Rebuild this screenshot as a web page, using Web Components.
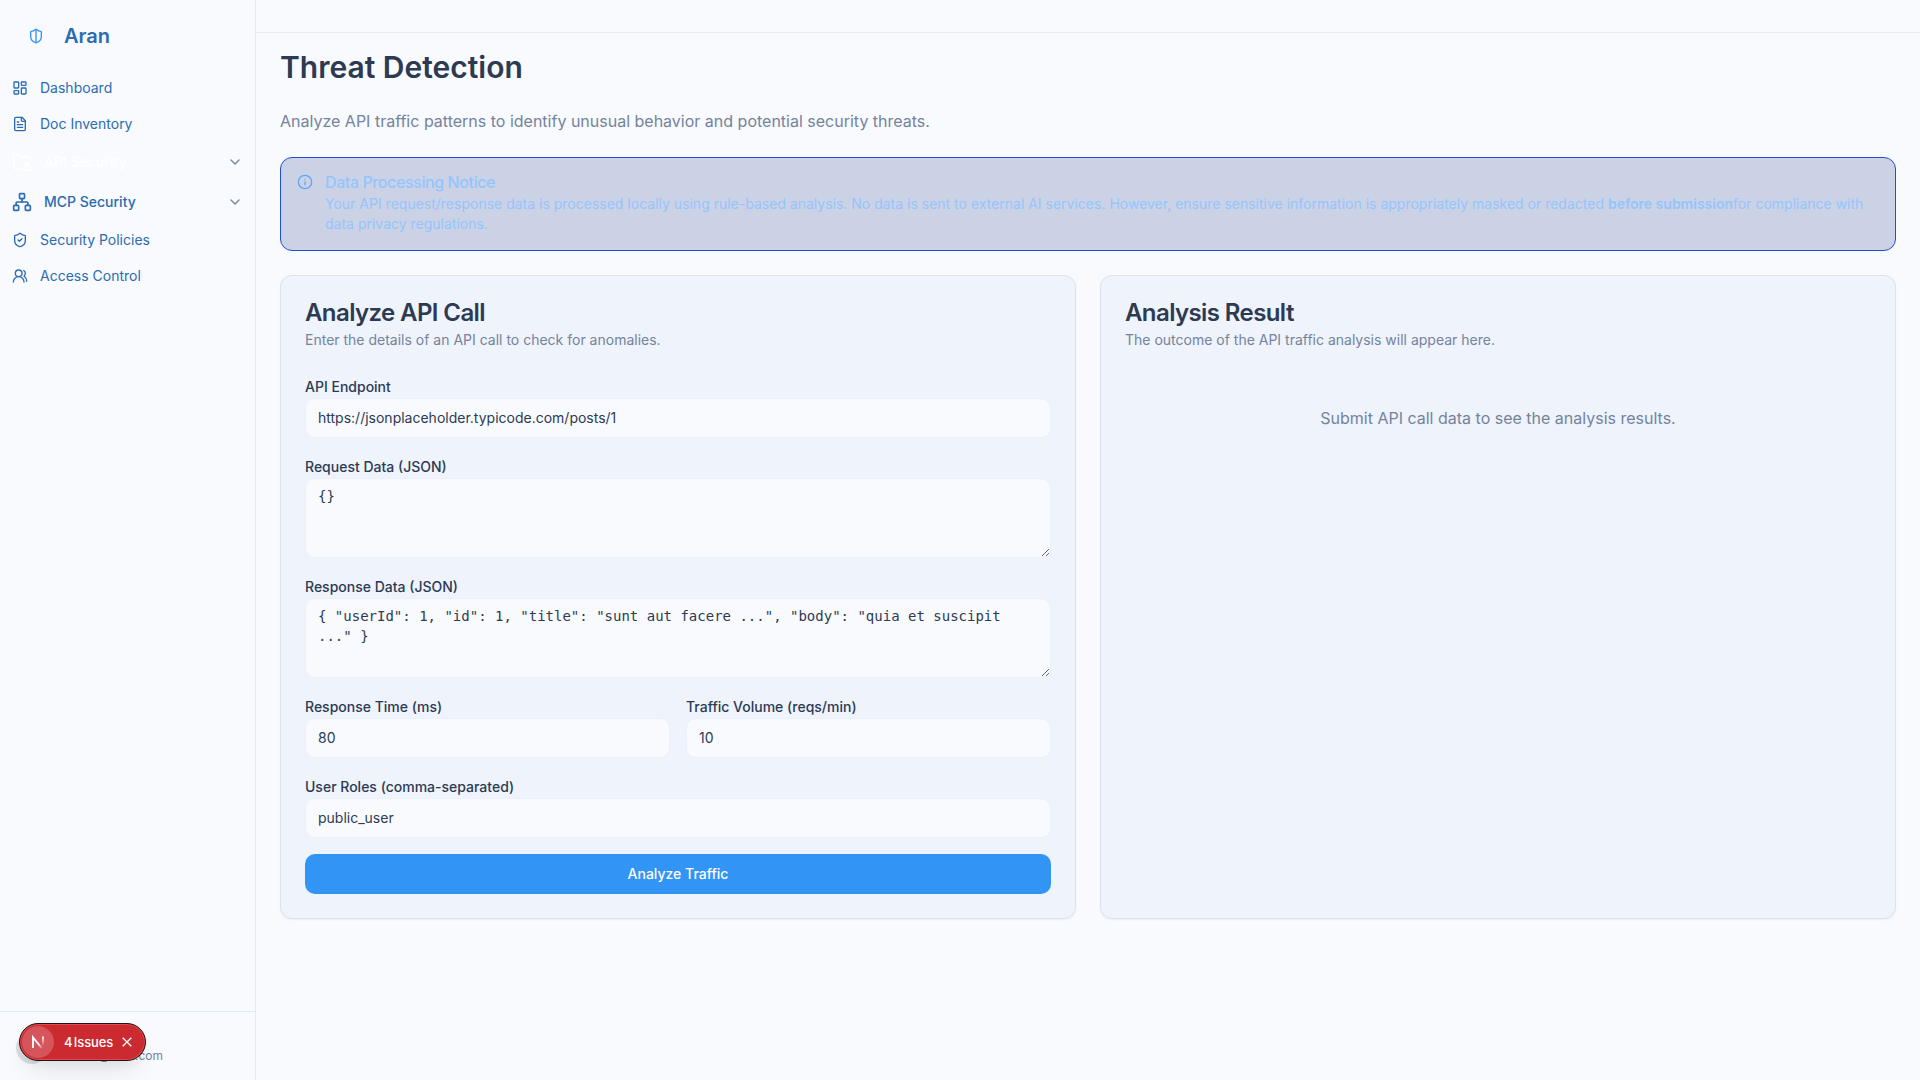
<!DOCTYPE html>
<html lang="en">
<head>
<meta charset="utf-8">
<title>Aran - Threat Detection</title>
<style>
body{margin:0;height:1080px;overflow:hidden;background:#f8fafe;color:#2d3a52;font-family:Inter,"Liberation Sans",sans-serif;font-size:16px;line-height:24px}
</style>
</head>
<body>
<aran-app></aran-app>
<script>
const ICONS = {
  shield: '<path d="M20 13c0 5-3.5 7.5-7.66 8.95a1 1 0 0 1-.67-.01C7.500 20.500 4 18 4 13V6a1 1 0 0 1 1-1c2 0 4.500-1.200 6.240-2.720a1.170 1.170 0 0 1 1.520 0C14.510 3.810 17 5 19 5a1 1 0 0 1 1 1z"/><path d="M12 22V2"/>',
  dashboard: '<rect width="7" height="9" x="3" y="3" rx="1"/><rect width="7" height="5" x="14" y="3" rx="1"/><rect width="7" height="9" x="14" y="12" rx="1"/><rect width="7" height="5" x="3" y="16" rx="1"/>',
  file: '<path d="M15 2H6a2 2 0 0 0-2 2v16a2 2 0 0 0 2 2h12a2 2 0 0 0 2-2V7Z"/><path d="M14 2v4a2 2 0 0 0 2 2h4"/><path d="M10 9H8"/><path d="M16 13H8"/><path d="M16 17H8"/>',
  folder: '<rect width="8" height="5" x="14" y="17" rx="1"/><path d="M10 20H4a2 2 0 0 1-2-2V5a2 2 0 0 1 2-2h3.900a2 2 0 0 1 1.690.9l.81 1.200a2 2 0 0 0 1.670.9H20a2 2 0 0 1 2 2v2.500"/><path d="M20 17v-2a2 2 0 1 0-4 0v2"/>',
  network: '<rect x="16" y="16" width="6" height="6" rx="1"/><rect x="2" y="16" width="6" height="6" rx="1"/><rect x="9" y="2" width="6" height="6" rx="1"/><path d="M5 16v-3a1 1 0 0 1 1-1h12a1 1 0 0 1 1 1v3"/><path d="M12 12V8"/>',
  check: '<path d="M20 13c0 5-3.500 7.500-7.660 8.950a1 1 0 0 1-.67-.01C7.500 20.500 4 18 4 13V6a1 1 0 0 1 1-1c2 0 4.500-1.200 6.240-2.720a1.170 1.170 0 0 1 1.520 0C14.510 3.810 17 5 19 5a1 1 0 0 1 1 1z"/><path d="m9 12 2 2 4-4"/>',
  users: '<path d="M18 21a8 8 0 0 0-16 0"/><circle cx="10" cy="8" r="5"/><path d="M22 20c0-3.370-2-6.500-4-8a5 5 0 0 0-.45-8.300"/>',
  chevron: '<path d="m6 9 6 6 6-6"/>',
  info: '<circle cx="12" cy="12" r="10"/><path d="M12 16v-4"/><path d="M12 8h.01"/>'
};
function define(name, html) {
  const template = document.createElement('template');
  template.innerHTML = html;
  customElements.define(name, class extends HTMLElement {
    constructor() {
      super();
      this.attachShadow({mode: 'open'}).append(template.content.cloneNode(true));
    }
  });
}
customElements.define('a-icon', class extends HTMLElement {
  connectedCallback() {
    const s = this.getAttribute('size') || 16;
    const root = this.shadowRoot || this.attachShadow({mode: 'open'});
    root.innerHTML = `<style>:host{display:block;flex:none;width:${s}px;height:${s}px}svg{display:block}</style>
    <svg width="${s}" height="${s}" viewBox="0 0 24 24" fill="none" stroke="currentColor" stroke-width="2" stroke-linecap="round" stroke-linejoin="round">${ICONS[this.getAttribute('name')]}</svg>`;
  }
});
customElements.define('nav-item', class extends HTMLElement {
  connectedCallback() {
    const group = this.hasAttribute('group');
    const root = this.shadowRoot || this.attachShadow({mode: 'open'});
    root.innerHTML = `<style>
    :host{display:flex;align-items:center;box-sizing:border-box;height:${group ? 36 : 32}px;padding:0 12px;gap:12px;font-size:14px;line-height:20px;color:#2b6cb0;font-weight:${group ? 500 : 400}}
    :host([active]){color:#fff}
    span{flex:1}.chev{color:#75839c}
    </style><a-icon name="${this.getAttribute('icon')}" size="${group ? 20 : 16}"></a-icon><span><slot></slot></span>${group ? '<a-icon class="chev" name="chevron"></a-icon>' : ''}`;
  }
});
define('side-bar', `<style>
:host{display:flex;flex-direction:column;box-sizing:border-box;width:256px;height:1080px;flex:none;border-right:1px solid #deebf8}
.brand{display:flex;align-items:center;gap:20px;height:72px;padding-left:28px;box-sizing:border-box;color:#3294f4}
.brand b{font-size:20px;line-height:28px;font-weight:600;color:#2b6cb0}
nav{display:flex;flex-direction:column;gap:4px;flex:1}
footer{height:69px;box-sizing:border-box;border-top:1px solid #deebf8;display:flex;padding:20px 0 0 16px}
.avatar{width:32px;height:32px;border-radius:50%;background:#dcdddf;flex:none}
.mail{font-size:12px;line-height:16px;color:#75839c;width:115px;text-align:right;padding-top:16px}
</style>
<div class="brand"><a-icon name="shield"></a-icon><b>Aran</b></div>
<nav>
<nav-item icon="dashboard">Dashboard</nav-item>
<nav-item icon="file">Doc Inventory</nav-item>
<nav-item icon="folder" group active>API Security</nav-item>
<nav-item icon="network" group>MCP Security</nav-item>
<nav-item icon="check">Security Policies</nav-item>
<nav-item icon="users">Access Control</nav-item>
</nav>
<footer><div class="avatar"></div><div class="mail">@aran.com</div></footer>`);
define('notice-box', `<style>
:host{display:flex;gap:12px;box-sizing:border-box;height:94px;padding:16px;border:1px solid #1d4ed8;border-radius:12px;background:#ccd2e6;color:#93c5fd;font-size:14px;line-height:20px}
a-icon{color:#60a5fa}
h5{margin:0 0 4px;font-size:16px;line-height:16px;font-weight:500;letter-spacing:-.025em}
::slotted(strong){font-weight:600}
</style><a-icon name="info"></a-icon><div><h5><slot name="title"></slot></h5><slot></slot></div>`);
define('panel-card', `<style>
:host{display:block;box-sizing:border-box;height:644px;padding:24px;border:1px solid #dce3ee;border-radius:12px;background:#eef3fc;box-shadow:0 1px 2px rgba(0,0,0,.05)}
h2{margin:0 0 5px;padding-top:1px;font-size:24px;line-height:24px;font-weight:600;letter-spacing:-.025em}
p{margin:0 0 24px;font-size:14px;line-height:20px;color:#75839c}
</style><h2><slot name="title"></slot></h2><p><slot name="description"></slot></p><slot></slot>`);
customElements.define('form-field', class extends HTMLElement {
  connectedCallback() {
    const area = this.hasAttribute('area');
    const root = this.shadowRoot || this.attachShadow({mode: 'open'});
    root.innerHTML = `<style>
    :host{display:block}
    label{display:block;font-size:14px;line-height:24px;font-weight:500;padding-top:1px;height:23px}
    .box{display:block;box-sizing:border-box;width:100%;margin:0;border:1px solid #ebf1fa;border-radius:10px;background:#f8fafe;color:#2d3a52;padding:7px 12px 9px;font:14px/20px Inter,sans-serif;outline:none}
    input.box{height:40px}
    textarea.box{height:80px;resize:vertical;overflow:auto;font-family:"DejaVu Sans Mono",monospace}
    </style><label></label>`;
    root.querySelector('label').textContent = this.getAttribute('label');
    const box = document.createElement(area ? 'textarea' : 'input');
    box.className = 'box';
    box.spellcheck = false;
    box.value = this.getAttribute('value');
    root.append(box);
  }
});
define('traffic-form', `<style>
:host{display:flex;flex-direction:column;gap:16px}
.pair{display:grid;grid-template-columns:1fr 1fr;gap:16px}
button{height:40px;border:0;border-radius:10px;background:#3294f4;color:#fff;font:500 14px/20px Inter,sans-serif}
</style>
<form-field label="API Endpoint" value="https://jsonplaceholder.typicode.com/posts/1"></form-field>
<form-field area label="Request Data (JSON)" value="{}"></form-field>
<form-field area label="Response Data (JSON)" value='{ "userId": 1, "id": 1, "title": "sunt aut facere ...", "body": "quia et suscipit ..." }'></form-field>
<div class="pair"><form-field label="Response Time (ms)" value="80"></form-field><form-field label="Traffic Volume (reqs/min)" value="10"></form-field></div>
<form-field label="User Roles (comma-separated)" value="public_user"></form-field>
<button>Analyze Traffic</button>`);
define('issues-badge', `<style>
:host{position:absolute;left:19px;top:1023px;box-sizing:border-box;width:127px;height:38px;border-radius:19px;border:1px solid #171717;background:#ca2a30;box-shadow:inset 0 0 0 1px #e5484d,0 16px 24px -8px rgba(0,0,0,.1),0 4px 8px rgba(0,0,0,.04);display:flex;align-items:center;color:#fff;font-size:13px;line-height:16px;font-weight:500}
.logo{width:32px;height:32px;border-radius:50%;background:#d5555a;margin-left:2px;flex:none}
svg{display:block}
span{margin-left:10px;width:50px;white-space:nowrap;word-spacing:-2px;letter-spacing:-.1px}
.x{margin-left:8px;flex:none}
</style>
<svg class="logo" viewBox="0 0 32 32" fill="none"><defs><linearGradient id="a" x1="12" y1="11" x2="21" y2="22" gradientUnits="userSpaceOnUse"><stop offset=".6" stop-color="#fff"/><stop offset="1" stop-color="#fff" stop-opacity="0"/></linearGradient><linearGradient id="b" x1="0" y1="10" x2="0" y2="20" gradientUnits="userSpaceOnUse"><stop stop-color="#fff"/><stop offset="1" stop-color="#fff" stop-opacity="0"/></linearGradient></defs><path d="M11 22V11.500L20.500 23" stroke="url(#a)" stroke-width="1.900"/><path d="M21 10.500V20" stroke="url(#b)" stroke-width="1.900"/></svg>
<span>4 Issues</span>
<svg class="x" width="10" height="10" viewBox="0 0 10 10" fill="none" stroke="#fff" stroke-width="1.300"><path d="M.7.7 9.300 9.300M9.300.7.7 9.300"/></svg>`);
define('aran-app', `<style>
:host{display:flex;width:1920px;height:1080px}
.page{flex:1;display:flex;flex-direction:column;min-width:0}
header{height:32px;border-bottom:1px solid #e6edf8}
main{padding:16px 24px;display:flex;flex-direction:column;gap:24px}
h1{margin:0;font-size:30px;line-height:36px;font-weight:600}
main>p{margin:0;color:#75839c}
.cards{display:grid;grid-template-columns:1fr 1fr;gap:24px}
.empty{text-align:center;color:#75839c;padding-top:32px}
</style>
<side-bar></side-bar>
<div class="page"><header></header><main>
<h1>Threat Detection</h1>
<p>Analyze API traffic patterns to identify unusual behavior and potential security threats.</p>
<notice-box><span slot="title">Data Processing Notice</span>Your API request/response data is processed locally using rule-based analysis. No data is sent to external AI services. However, ensure sensitive information is appropriately masked or redacted <strong>before submission</strong>for compliance with data privacy regulations.</notice-box>
<div class="cards">
<panel-card><span slot="title">Analyze API Call</span><span slot="description">Enter the details of an API call to check for anomalies.</span><traffic-form></traffic-form></panel-card>
<panel-card><span slot="title">Analysis Result</span><span slot="description">The outcome of the API traffic analysis will appear here.</span><div class="empty">Submit API call data to see the analysis results.</div></panel-card>
</div></main></div>
<issues-badge></issues-badge>`);
</script>
</body>
</html>
